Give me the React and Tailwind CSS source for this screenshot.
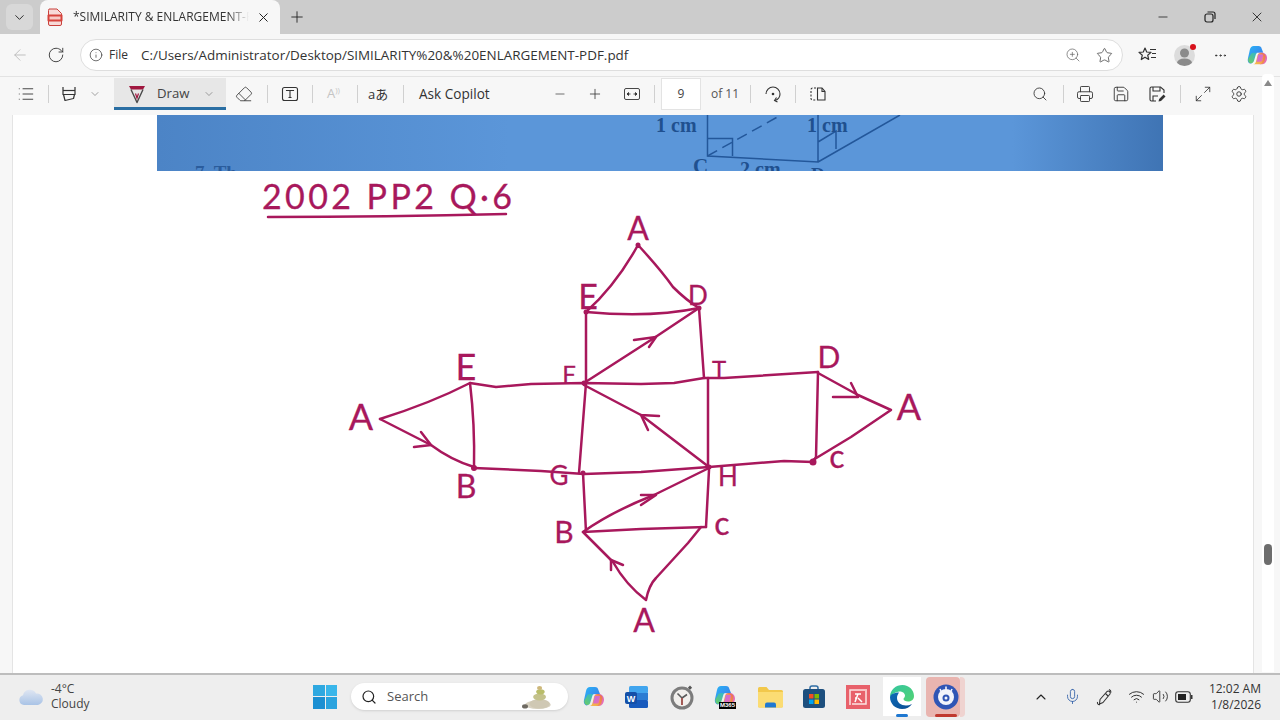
import React from "react";
import { ChevronDown, X, Plus, Minus, ArrowLeft, RotateCw, Info, ZoomIn, Star, MoreHorizontal, List, Eraser, Search, Printer, Save, Maximize2, Settings, Mic, Wifi, Volume2, ChevronUp } from "lucide-react";

const INK = "#a8185c";
const ui = { fontFamily: '"Open Sans","Noto Sans",sans-serif' };

function Sep({ className = "" }) {
  return <div className={"w-px h-[18px] bg-[#d0d0d0] shrink-0 " + className} />;
}

function CopilotIcon({ size = 24 }) {
  return (
    <svg width={size} height={size} viewBox="0 0 24 24" className="shrink-0">
      <defs>
        <linearGradient id="cpa" x1="0" y1="0" x2="1" y2="1"><stop offset="0" stopColor="#29b6f6" /><stop offset="1" stopColor="#3f6fe8" /></linearGradient>
        <linearGradient id="cpb" x1="0" y1="0" x2="1" y2="1"><stop offset="0" stopColor="#c06be8" /><stop offset="1" stopColor="#ef6fa8" /></linearGradient>
        <linearGradient id="cpc" x1="0" y1="1" x2="1" y2="0"><stop offset="0" stopColor="#f5b52e" /><stop offset="1" stopColor="#f0703c" /></linearGradient>
        <linearGradient id="cpd" x1="0" y1="1" x2="1" y2="0"><stop offset="0" stopColor="#6fce5e" /><stop offset="1" stopColor="#2cb5d8" /></linearGradient>
      </defs>
      <path d="M8 2h5c2 0 3 1 3.400 3L18 9h-6c-2 0-3 1-3.500 3L7 18c-.5 2-2 3-3.500 2-1.500-1-2-3-1.500-5l2-9c.5-2.500 2-4 4-4z" fill="url(#cpa)" />
      <path d="M2.500 15c-.6 2.500.3 4.600 2.500 5 2 .2 3-1 3.500-3L10 12c.4-2 1.400-3 2-3H8C6 9 5 10 4.500 12z" fill="url(#cpd)" />
      <path d="M11 9h6c3 0 5 2.500 5 5.500 0 3-2 6.500-5 6.500h-3c2 0 2.500-1.500 3-3l1-3.500c.6-2.500-1-5.500-7-5.500z" fill="url(#cpb)" />
      <path d="M15.500 9c-2 0-3 1-3.500 3l-1.500 6c-.5 2-1.500 3-3 3h8c2 0 3.500-1.500 4-3.500l1-4c.4-2-1.500-4.500-5-4.500z" fill="url(#cpc)" opacity=".85" />
      <path d="M13 11h5l-1 6c-.3 1-1 1.500-2 1.500h-4l1.500-6c.1-.8.5-1.500.5-1.500z" fill="url(#cpb)" />
    </svg>
  );
}

function PdfIcon() {
  return (
    <svg width="16" height="18" viewBox="0 0 16 18" className="shrink-0">
      <path d="M2 1h8l4.500 4.500V16a1.500 1.500 0 0 1-1.500 1.500H3A1.500 1.500 0 0 1 1.500 16V2.500z" fill="#f7d9d7" stroke="#c9413c" strokeWidth="1" />
      <rect x="0.500" y="6.500" width="15" height="7" rx="1" fill="#d6433c" />
      <rect x="2.500" y="8.500" width="11" height="3" fill="#f7c9c5" />
    </svg>
  );
}

function Highlighter() {
  return (
    <svg width="18" height="18" viewBox="0 0 18 18" fill="none" stroke="#333" strokeWidth="1.200" strokeLinejoin="round">
      <path d="M3 2v7.500h12V2" />
      <path d="M3 5.500h12" />
      <path d="M3.500 9.500 5 15.500l8.500-2 1-4" />
    </svg>
  );
}

function DrawPen() {
  return (
    <svg width="18" height="20" viewBox="0 0 18 20" fill="none">
      <path d="M1 2h16l-2 3.500H3z" fill="#a0173f" />
      <path d="M3 5.500 9 18.500l6-13" stroke="#4a4a4a" strokeWidth="1.400" strokeLinejoin="round" />
      <path d="M7.500 9.500 9 14l1.500-4.500" stroke="#a0173f" strokeWidth="1.200" />
    </svg>
  );
}

function TextBox() {
  return (
    <svg width="18" height="18" viewBox="0 0 18 18" fill="none" stroke="#333" strokeWidth="1.100">
      <rect x="1.500" y="2.500" width="15" height="13" rx="2" />
      <path d="M5.500 6V5.500h7V6M9 5.500v7M7.500 12.500h3" />
    </svg>
  );
}

function FitWidth() {
  return (
    <svg width="18" height="18" viewBox="0 0 18 18" fill="none" stroke="#333" strokeWidth="0.900">
      <rect x="1.500" y="3.500" width="15" height="11" rx="1.500" />
      <path d="M4.500 9h3M13.500 9h-3" />
      <path d="M5.500 7.500 4 9l1.500 1.500zM12.500 7.500 14 9l-1.500 1.500z" fill="#333" />
    </svg>
  );
}

function RotateIcon() {
  return (
    <svg width="18" height="18" viewBox="0 0 18 18" fill="none" stroke="#333" strokeWidth="1.100">
      <path d="M2 9a7 7 0 0 1 14 0c0 3-2 5.500-5 6.500" />
      <path d="M13.500 17l-3-1.500 2-3" />
      <circle cx="9" cy="9" r="1.300" fill="#333" stroke="none" />
    </svg>
  );
}

function TwoPage() {
  return (
    <svg width="18" height="18" viewBox="0 0 18 18" fill="none" stroke="#333" strokeWidth="1.100">
      <path d="M7 3H3.500A1.500 1.500 0 0 0 2 4.500v9A1.500 1.500 0 0 0 3.500 15H7" strokeDasharray="2 1.500" />
      <path d="M8.500 3h4.500l3 3.500V15H8.500z" />
      <path d="M13 3v3.500h3" />
    </svg>
  );
}

function SaveAs() {
  return (
    <svg width="18" height="18" viewBox="0 0 18 18" fill="none" stroke="#333" strokeWidth="1.100">
      <path d="M8 16H3.500A1.500 1.500 0 0 1 2 14.500v-11A1.500 1.500 0 0 1 3.500 2h9L16 5v3" />
      <path d="M5 2v4h7V2M5 16v-5h5" />
      <path d="M10.500 16.500l.6-2.500 4.500-4.500 1.900 1.900-4.500 4.500z" fill="#333" stroke="none" />
    </svg>
  );
}

function FavList() {
  return (
    <svg width="20" height="18" viewBox="0 0 20 18" fill="none" stroke="#333" strokeWidth="1.200" strokeLinejoin="round">
      <path d="M7 2l1.700 4 4.300.4-3.300 2.800 1 4.300L7 11.200l-3.700 2.300 1-4.300L1 6.400 5.300 6z" />
      <path d="M12 3.500h6M14 7.500h4M13 11.500h5" />
    </svg>
  );
}

function Avatar() {
  return (
    <div className="relative w-[21px] h-[21px] rounded-full bg-[#dcdcdc] overflow-hidden shrink-0">
      <svg width="21" height="21" viewBox="0 0 21 21"><circle cx="10.500" cy="8" r="4.500" fill="#8b8b8b" /><ellipse cx="10.500" cy="18" rx="7.500" ry="4.500" fill="#8b8b8b" /></svg>
    </div>
  );
}

function WinLogo() {
  return (
    <div className="grid grid-cols-2 gap-px w-[24px] h-[24px] shrink-0">
      <div className="bg-[#2ea8e0]" /><div className="bg-[#39b6ea]" /><div className="bg-[#1b8fd2]" /><div className="bg-[#2aa3de]" />
    </div>
  );
}

function Cloud() {
  return (
    <svg width="26" height="20" viewBox="0 0 26 20" className="shrink-0">
      <defs><linearGradient id="cl" x1="0" y1="0" x2="0" y2="1"><stop offset="0" stopColor="#dfe6f2" /><stop offset="1" stopColor="#a9c3e6" /></linearGradient></defs>
      <path d="M6 18a5 5 0 0 1-1-9.800A7 7 0 0 1 18 6.500 5.500 5.500 0 0 1 20 18z" fill="url(#cl)" />
    </svg>
  );
}

function Stones() {
  return (
    <svg width="38" height="24" viewBox="0 0 38 28" className="shrink-0">
      <ellipse cx="20" cy="23" rx="15" ry="5" fill="#d8d2c2" />
      <ellipse cx="22" cy="22" rx="12" ry="5.500" fill="#cfc8b4" />
      <ellipse cx="22" cy="14" rx="7.500" ry="4" fill="#c4c28c" />
      <ellipse cx="23" cy="8" rx="5" ry="3" fill="#b9bd6a" />
      <ellipse cx="22" cy="3.500" rx="3" ry="2.200" fill="#cdb77a" />
      <ellipse cx="5" cy="25" rx="3.500" ry="2.400" fill="#6e6a62" />
    </svg>
  );
}

function Word() {
  return (
    <svg width="24" height="24" viewBox="0 0 24 24" className="shrink-0">
      <rect x="4" y="1" width="19" height="7.500" rx="1.500" fill="#41a5ee" />
      <rect x="4" y="8" width="19" height="7.500" fill="#2b7cd3" />
      <rect x="4" y="15" width="19" height="8" rx="1.500" fill="#185abd" />
      <rect x="0" y="7" width="12" height="12" rx="2" fill="#1450a8" />
      <text x="6" y="16.500" fontSize="9" fontWeight="700" fill="#fff" textAnchor="middle" fontFamily="Liberation Sans, sans-serif">W</text>
    </svg>
  );
}

function ClockApp() {
  return (
    <svg width="26" height="26" viewBox="0 0 26 26" className="shrink-0">
      <circle cx="13" cy="14" r="11.500" fill="#7c7c7c" />
      <circle cx="13" cy="14" r="8.500" fill="#f1efec" />
      <path d="M13 14 8.500 9.500M13 14l5-3.500M13 14v7" stroke="#5a5a5a" strokeWidth="1.600" />
      <path d="M13 14v7" stroke="#c2473f" strokeWidth="1.200" />
      <rect x="20" y="2" width="3" height="3" fill="#555" transform="rotate(45 21 3)" />
    </svg>
  );
}

function M365() {
  return (
    <div className="relative w-[26px] h-[26px] shrink-0">
      <CopilotIcon size={24} />
      <span className="absolute left-[6px] bottom-[1px] bg-black text-white text-[6px] leading-[7px] px-[1px] font-bold" style={{ fontFamily: '"Liberation Sans",sans-serif' }}>M365</span>
    </div>
  );
}

function Folder() {
  return (
    <svg width="26" height="24" viewBox="0 0 26 24" className="shrink-0">
      <path d="M1 3.500A1.500 1.500 0 0 1 2.500 2h7l2.500 3h12.500A1.500 1.500 0 0 1 26 6.500V21a1.500 1.500 0 0 1-1.500 1.500h-22A1.500 1.500 0 0 1 1 21z" fill="#f2c84b" />
      <path d="M1 7h25v14a1.500 1.500 0 0 1-1.500 1.500h-22A1.500 1.500 0 0 1 1 21z" fill="#fbdc73" />
      <path d="M8 22.500v-3a2 2 0 0 1 2-2h7a2 2 0 0 1 2 2v3z" fill="#1f78d1" />
    </svg>
  );
}

function Store() {
  return (
    <svg width="24" height="24" viewBox="0 0 24 24" className="shrink-0">
      <path d="M8 5V3a2 2 0 0 1 2-2h4a2 2 0 0 1 2 2v2" fill="none" stroke="#2f6ea5" strokeWidth="1.500" />
      <rect x="1" y="4" width="22" height="19" rx="2.500" fill="#1d4f7e" />
      <rect x="7" y="9" width="4.500" height="4.500" fill="#f25022" /><rect x="12.500" y="9" width="4.500" height="4.500" fill="#7fba00" />
      <rect x="7" y="14.500" width="4.500" height="4.500" fill="#00a4ef" /><rect x="12.500" y="14.500" width="4.500" height="4.500" fill="#ffb900" />
    </svg>
  );
}

function RedApp() {
  return (
    <svg width="24" height="24" viewBox="0 0 24 24" className="shrink-0">
      <rect width="24" height="24" fill="#e8616b" />
      <path d="M4 20V5h15M20 4v15H6" fill="none" stroke="#fbe3e4" strokeWidth="1.500" />
      <path d="M9 9h6M12 9l-3 8M12 13l4 4M9 13h2" fill="none" stroke="#fff" strokeWidth="1.500" />
    </svg>
  );
}

function Edge() {
  return (
    <svg width="26" height="26" viewBox="0 0 26 26" className="shrink-0">
      <defs>
        <linearGradient id="eg" x1="0" y1="0" x2="1" y2="1"><stop offset="0" stopColor="#34c6a0" /><stop offset="1" stopColor="#52d273" /></linearGradient>
        <linearGradient id="eb" x1="0" y1="0" x2="1" y2="1"><stop offset="0" stopColor="#0f6cb8" /><stop offset="1" stopColor="#0a4d92" /></linearGradient>
      </defs>
      <path d="M1 13C1 5.500 7 1 13.500 1 20 1 25 6 25 12c0 4-3 5.500-6 5.500-2.500 0-4.500-1-4.500-2.500 0-1 1.500-1.500 1.500-3.500S13.500 7 10 7.500C5 8.500 2 11 1 13z" fill="url(#eg)" />
      <path d="M1 13c0 7 5.500 12 12 12 4.500 0 8-2 10-5-2 1-4 1.500-6 1.500-5 0-9-3-9-7.500 0-2.500 1-4 2-5.500C5.500 8.500 1.500 10 1 13z" fill="url(#eb)" />
    </svg>
  );
}

function ActiveApp() {
  return (
    <svg width="26" height="26" viewBox="0 0 26 26" className="shrink-0">
      <circle cx="13" cy="13" r="12.500" fill="#2f55b5" />
      <circle cx="13" cy="13" r="8" fill="#f2f4fb" />
      <circle cx="13" cy="14" r="3.500" fill="#2f55b5" />
      <circle cx="13" cy="14" r="1.500" fill="#f2f4fb" />
      <path d="M7 5l2 4M19 5l-2 4M13 2.500V7" stroke="#f2f4fb" strokeWidth="1.600" />
    </svg>
  );
}

function PenTray() {
  return (
    <svg width="18" height="18" viewBox="0 0 18 18" fill="none" stroke="#333" strokeWidth="1.100" strokeLinejoin="round" className="shrink-0">
      <path d="M4 11.500 11 3.500a2 2 0 0 1 3 2.500l-7 8.500-3.500 1.500z" />
      <path d="M9.500 5.500 12 8M13 1.500c1.500.5 2 1.500 2 3" />
      <path d="M1.500 14c-.5 2 1 3 2.500 2.500" />
    </svg>
  );
}

function Battery() {
  return (
    <svg width="18" height="14" viewBox="0 0 18 14" fill="none" className="shrink-0">
      <rect x="0.700" y="1.700" width="14.600" height="10.600" rx="2.500" stroke="#333" strokeWidth="1.100" />
      <rect x="3" y="4" width="8" height="6" fill="#222" />
      <rect x="16" y="5" width="1.500" height="4" fill="#333" />
    </svg>
  );
}

function Stroke({ d }) {
  return <path d={d} fill="none" stroke={INK} strokeWidth="2.500" strokeLinecap="round" strokeLinejoin="round" />;
}

function Label({ x, y, children, size = 26 }) {
  return (
    <text x={x} y={y} fontSize={size} fill={INK} stroke={INK} strokeWidth="0.300" textAnchor="middle" fontFamily='"Lato","Open Sans",sans-serif'>
      {children}
    </text>
  );
}

function Diagram() {
  return (
    <svg viewBox="12 171 1242 501" className="block w-[1242px] h-[501px]">
      <text x="261" y="209" fontSize="34" letterSpacing="3.400" fill={INK} stroke={INK} strokeWidth="0.300" fontFamily='"Lato","Open Sans",sans-serif'>2002 PP2 Q·6</text>
      <Stroke d="M267 217 Q385 217 505 214" />

      <Stroke d="M379 419 Q430 403 469 383 Q474 425 473 468" />
      <Stroke d="M379 419 L430 445 Q450 460 473 467" />
      <Stroke d="M420 432 L430 445 L413 447" />
      <Stroke d="M469 383 L495 387 L530 384 L583 383 L640 384 L673 383 L703 378 L723 378 L817 372" />
      <Stroke d="M473 468 L540 471 L583 474 L640 472 L708 467 L783 461 L812 462" />
      <Stroke d="M585 312 L585 383 L578 473" />
      <Stroke d="M582 473 L585 532" />
      <Stroke d="M583 385 L640 415 L708 467" />
      <Stroke d="M640 415 L658 416 M640 415 L647 430" />
      <Stroke d="M698 308 L703 378" />
      <Stroke d="M707 378 L707 467 L708 470 L705 527" />
      <Stroke d="M817 372 L815 457 L812 462" />
      <Stroke d="M817 373 L857 395 L890 410 L850 437 L812 460" />
      <Stroke d="M832 397 L857 397 M850 383 L857 397" />
      <Stroke d="M585 312 Q615 285 637 245 Q660 270 672 287 Q685 300 698 308" />
      <Stroke d="M585 312 Q650 318 698 308" />
      <Stroke d="M583 383 L653 338 L698 308" />
      <Stroke d="M633 340 L655 337 L648 347" />
      <Stroke d="M582 532 Q610 512 653 495 L708 468" />
      <Stroke d="M640 495 L655 495 L640 505" />
      <Stroke d="M582 532 L640 529 L705 527" />
      <Stroke d="M583 533 L612 562 Q625 585 645 600 Q648 585 655 578 L687 543 L700 527" />
      <Stroke d="M610 570 L610 560 L622 565" />

      <circle cx="637" cy="245" r="2.500" fill={INK} />
      <circle cx="585" cy="312" r="2.500" fill={INK} />
      <circle cx="698" cy="308" r="2.500" fill={INK} />
      <circle cx="583" cy="383" r="2.500" fill={INK} />
      <circle cx="473" cy="468" r="3" fill={INK} />
      <circle cx="812" cy="462" r="3.500" fill={INK} />
      <circle cx="708" cy="467" r="2.500" fill={INK} />
      <circle cx="582" cy="473" r="2.500" fill={INK} />

      <Label x={637} y={240} size={32}>A</Label>
      <Label x={587} y={309} size={34}>E</Label>
      <Label x={697} y={305} size={26}>D</Label>
      <Label x={465} y={380} size={36}>E</Label>
      <Label x={568} y={383} size={24}>F</Label>
      <Label x={360} y={430} size={36}>A</Label>
      <Label x={718} y={378} size={24}>T</Label>
      <Label x={828} y={368} size={30}>D</Label>
      <Label x={908} y={420} size={36}>A</Label>
      <Label x={465} y={498} size={32}>B</Label>
      <Label x={558} y={485} size={26}>G</Label>
      <Label x={727} y={486} size={26}>H</Label>
      <Label x={836} y={468} size={32}>c</Label>
      <Label x={563} y={543} size={30}>B</Label>
      <Label x={721} y={535} size={32}>c</Label>
      <Label x={643} y={632} size={32}>A</Label>
    </svg>
  );
}

function ScanBand() {
  const serif = { fontFamily: '"Liberation Serif",serif' };
  return (
    <div className="relative ml-[144px] w-[1006px] h-[56px] shrink-0 overflow-hidden bg-[linear-gradient(90deg,#4c84c6_0%,#5b96d9_35%,#5b96d9_85%,#3f74b4_100%)] text-[#20508f] font-bold" style={serif}>
      <svg viewBox="157 115 1006 56" className="absolute inset-0 w-full h-full" fill="none" stroke="#23579a" strokeWidth="1.500">
        <path d="M707.500 115V156L818 162V115M707.500 138.500H732.500V156M818 162 900 115M818 142 836 131V149" />
        <path d="M707.500 156 781 115" strokeDasharray="11 6" />
      </svg>
      <span className="absolute left-[499px] top-0 text-[20px] leading-[20px]">1 cm</span>
      <span className="absolute left-[650px] top-0 text-[20px] leading-[20px]">1</span>
      <span className="absolute left-[665px] top-0 text-[20px] leading-[20px]">cm</span>
      <span className="absolute left-[536px] top-[41px] text-[21px] leading-[20px]">C</span>
      <span className="absolute left-[583px] top-[44px] text-[20px] leading-[20px]">2 cm</span>
      <span className="absolute left-[654px] top-[50px] text-[19px] leading-[20px]">D</span>
      <span className="absolute left-[38px] top-[48px] text-[19px] leading-[20px] text-[#2a5c9c]">7. Th</span>
    </div>
  );
}

export default function App() {
  return (
    <div className="relative w-[1280px] h-[720px] overflow-hidden flex flex-col bg-[#f7f7f7] text-[#333]" style={ui}>
      {/* Tab strip */}
      <div className="h-[34px] bg-[#cccccc] flex items-center shrink-0 pl-[6px]">
        <div className="w-[27px] h-[26px] rounded-md bg-[#d8d8d8] flex items-center justify-center">
          <ChevronDown size={15} strokeWidth={1.5} className="text-[#222]" />
        </div>
        <div className="ml-[7px] w-[240px] h-[34px] rounded-t-lg bg-[#f7f7f7] flex items-center pl-[7px] pr-[9px]">
          <PdfIcon />
          <span className="ml-[10px] w-[176px] overflow-hidden whitespace-nowrap text-[12px] text-[#333] [mask-image:linear-gradient(90deg,#000_88%,transparent)]">*SIMILARITY &amp; ENLARGEMENT-P</span>
          <X size={15} strokeWidth={1.6} className="ml-auto text-[#222]" />
        </div>
        <Plus size={18} strokeWidth={1.2} className="ml-[8px] text-[#222]" />
        <Minus size={14} strokeWidth={1.4} className="ml-auto text-[#222]" />
        <svg width="12" height="12" viewBox="0 0 12 12" fill="none" stroke="#222" strokeWidth="1.200" className="ml-[34px]"><rect x="1" y="3" width="8" height="8" rx="2" /><path d="M3.500 1H9a2 2 0 0 1 2 2v5" /></svg>
        <X size={16} strokeWidth={1.3} className="ml-[33px] mr-[15px] text-[#222]" />
      </div>

      {/* Address row */}
      <div className="h-[42px] flex items-center shrink-0">
        <ArrowLeft size={18} strokeWidth={1.1} className="ml-[11px] text-[#b5b5b5]" />
        <RotateCw size={18} strokeWidth={1.2} className="ml-[18px] text-[#333]" />
        <div className="ml-[15px] w-[1043px] h-[32px] rounded-full bg-white border border-[#dedede] flex items-center pl-[8px] pr-[9px]">
          <Info size={14} strokeWidth={1.2} className="text-[#333]" />
          <span className="ml-[6px] text-[12px] text-[#333]">File</span>
          <span className="ml-[13px] text-[13.45px] text-[#333] whitespace-nowrap">C:/Users/Administrator/Desktop/SIMILARITY%20&amp;%20ENLARGEMENT-PDF.pdf</span>
          <ZoomIn size={16} strokeWidth={1.1} className="ml-auto text-[#666]" />
          <Star size={17} strokeWidth={1.1} className="ml-[15px] text-[#444]" />
        </div>
        <div className="ml-[15px]"><FavList /></div>
        <div className="relative ml-[16px]">
          <Avatar />
          <div className="absolute -top-[1px] -right-[1px] w-[6px] h-[6px] rounded-full bg-[#d8121c]" />
        </div>
        <MoreHorizontal size={15} strokeWidth={1.6} className="ml-[18px] text-[#333]" />
        <div className="ml-[18px]"><CopilotIcon size={23} /></div>
      </div>

      {/* PDF toolbar */}
      <div className="relative h-[39px] pb-[4px] flex items-center shrink-0 border-t border-[#e3e3e3] text-[#333]">
        <List size={18} strokeWidth={1.2} className="ml-[17px]" />
        <Sep className="ml-[13px]" />
        <div className="ml-[11px]"><Highlighter /></div>
        <ChevronDown size={12} strokeWidth={1.2} className="ml-[11px] text-[#666]" />
        <div className="ml-[13px] w-[112px] h-[32px] pt-[3px] bg-[#e7e7e7] border-b-[3px] border-[#2a6ea3] flex items-center pl-[14px]">
          <DrawPen />
          <span className="ml-[11px] text-[13.2px] text-[#444]">Draw</span>
          <ChevronDown size={12} strokeWidth={1.2} className="ml-[13px] text-[#666]" />
        </div>
        <Eraser size={18} strokeWidth={1.1} className="ml-[9px]" />
        <Sep className="ml-[14px]" />
        <div className="ml-[13px]"><TextBox /></div>
        <Sep className="ml-[13px]" />
        <span className="ml-[14px] text-[13px] text-[#c4c4c4] w-[16px]">A<span className="text-[8px] align-top">))</span></span>
        <Sep className="ml-[14px]" />
        <span className="ml-[10px] text-[13px] leading-none w-[22px] whitespace-nowrap" style={{ fontFamily: '"Open Sans","Noto Sans CJK JP",sans-serif' }}>aあ</span>
        <Sep className="ml-[13px]" />
        <span className="ml-[15px] pt-[1px] text-[13.6px] w-[71px] whitespace-nowrap">Ask Copilot</span>
        <Minus size={14} strokeWidth={1.2} className="ml-[63px]" />
        <Plus size={16} strokeWidth={1.2} className="ml-[20px]" />
        <div className="ml-[20px]"><FitWidth /></div>
        <Sep className="ml-[13px]" />
        <div className="ml-[6px] w-[40px] h-[32px] bg-white border border-[#e3e3e3] flex items-center justify-center text-[12px] text-[#444]">9</div>
        <span className="ml-[10px] w-[27px] text-[12px] text-[#555] whitespace-nowrap">of 11</span>
        <Sep className="ml-[12px]" />
        <div className="ml-[13px]"><RotateIcon /></div>
        <Sep className="ml-[13px]" />
        <div className="ml-[13px]"><TwoPage /></div>
        <Search size={16} strokeWidth={1.3} className="ml-[205px]" />
        <Sep className="ml-[15px]" />
        <Printer size={18} strokeWidth={1.2} className="ml-[12px]" />
        <Save size={18} strokeWidth={1.2} className="ml-[18px]" />
        <div className="ml-[18px]"><SaveAs /></div>
        <Sep className="ml-[14px]" />
        <Maximize2 size={18} strokeWidth={1.1} className="ml-[13px]" />
        <Settings size={18} strokeWidth={1.2} className="ml-[18px]" />
      </div>

      {/* Document viewport */}
      <div className="flex-1 min-h-0 flex bg-[#f7f7f7]">
        <div className="ml-[12px] w-[1242px] bg-white border-x border-[#e4e4e4] flex flex-col overflow-hidden">
          <ScanBand />
          <Diagram />
        </div>
      </div>

      {/* Scrollbar overlays toolbar and page */}
      <div className="absolute left-[1262px] top-[74px] w-[12px] h-[598px] bg-white rounded-t">
        <div className="mx-auto mt-[6px] w-0 h-0 border-x-[4px] border-x-transparent border-b-[6px] border-b-[#8a8a8a]" />
        <div className="absolute left-[2px] top-[470px] w-[8px] h-[21px] rounded-sm bg-[#6d6d6d]" />
      </div>

      {/* Taskbar */}
      <div className="relative h-[47px] shrink-0 pb-[2px] bg-[#eeeeee] border-t-2 border-[#bdbdbd] flex items-center">
        <div className="ml-[18px]"><Cloud /></div>
        <div className="ml-[7px] mb-[2px] w-[39px] flex flex-col text-[12px] leading-[15px] text-[#444]">
          <span>-4°C</span>
          <span>Cloudy</span>
        </div>
        <div className="ml-[223px]"><WinLogo /></div>
        <div className="ml-[14px] w-[217px] h-[27px] shrink-0 rounded-full bg-white shadow-sm flex items-center pl-[10px] pr-[12px]">
          <Search size={16} strokeWidth={1.8} className="text-[#222]" />
          <span className="ml-[10px] text-[13px] text-[#555]">Search</span>
          <div className="ml-auto"><Stones /></div>
        </div>
        <div className="ml-[14px]"><CopilotIcon size={24} /></div>
        <div className="ml-[19px]"><Word /></div>
        <div className="ml-[20px]"><ClockApp /></div>
        <div className="ml-[18px]"><M365 /></div>
        <div className="ml-[18px]"><Folder /></div>
        <div className="ml-[19px]"><Store /></div>
        <div className="ml-[20px]"><RedApp /></div>
        <div className="relative ml-[19px] w-[26px] h-[26px] shrink-0">
          <div className="absolute -left-[6px] -top-[7px] w-[38px] h-[39px] bg-white" />
          <div className="relative"><Edge /></div>
          <div className="absolute left-[7px] top-[30px] w-[12px] h-[3px] rounded bg-[#1f78d1]" />
        </div>
        <div className="relative ml-[18px] w-[26px] h-[26px] shrink-0">
          <div className="absolute -left-[7px] -top-[7px] w-[34px] h-[40px] rounded-sm bg-[#e9b5b0]" />
          <div className="absolute left-[27px] -top-[7px] w-[5px] h-[40px] rounded-r bg-[#efd3d0]" />
          <div className="relative"><ActiveApp /></div>
          <div className="absolute left-[2px] top-[30px] w-[22px] h-[3px] rounded bg-[#c0392f]" />
        </div>
        <ChevronUp size={16} strokeWidth={1.6} className="ml-[74px] shrink-0 text-[#222]" />
        <Mic size={17} strokeWidth={1.2} className="ml-[15px] shrink-0 text-[#2f5fa8]" />
        <div className="ml-[15px]"><PenTray /></div>
        <Wifi size={17} strokeWidth={1.3} className="ml-[14px] shrink-0 text-[#222]" />
        <Volume2 size={17} strokeWidth={1.2} className="ml-[7px] shrink-0 text-[#222]" />
        <div className="ml-[6px]"><Battery /></div>
        <div className="ml-auto mr-[19px] flex flex-col items-end shrink-0 whitespace-nowrap text-[12px] leading-[16px] text-[#333]">
          <span>12:02 AM</span>
          <span>1/8/2026</span>
        </div>
      </div>
    </div>
  );
}
